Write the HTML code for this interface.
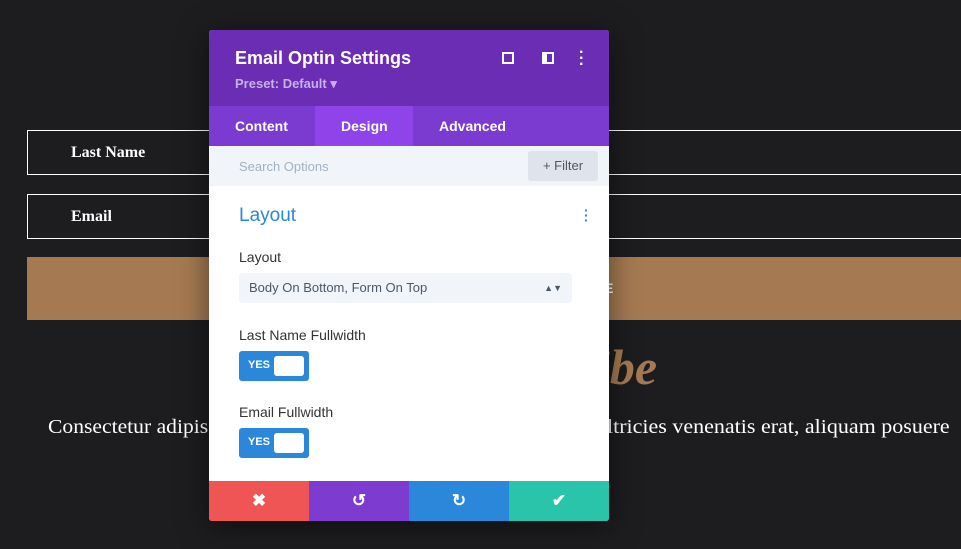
<!DOCTYPE html><html><head><style>
body{margin:0;width:961px;height:549px;background:#1d1d20;position:relative;overflow:hidden;font-family:"Liberation Sans",sans-serif}
.box{position:absolute;left:27px;right:-5px;border:1px solid #fff;height:45px;color:#fff;font-family:"Liberation Serif",serif;font-weight:bold;font-size:16px;line-height:43px;padding-left:43px;box-sizing:border-box}
.m{position:absolute;left:209px;top:30px;width:400px;height:491px;background:#fff;border-radius:3px;overflow:hidden;box-shadow:0 5px 30px rgba(0,0,0,.5)}
.lbl{position:absolute;left:30px;font-size:14px;color:#333}
.tg{position:absolute;left:30px;width:70px;height:30px;background:#2b87da;border-radius:3px}
.tg span{position:absolute;left:9px;top:8px;color:#fff;font-size:11px;font-weight:bold}
.tg i{position:absolute;right:5px;top:5px;width:30px;height:20px;background:#fff;border-radius:3px}
.b{position:absolute;top:451px;width:100px;height:40px;color:#fff;font-weight:bold;font-size:17px;text-align:center;line-height:40px}
</style></head><body>
<div class="box" style="top:130px">Last Name</div>
<div class="box" style="top:194px">Email</div>
<div style="position:absolute;left:27px;right:0;top:257px;height:63px;background:#a57a52"></div>
<div style="position:absolute;left:604px;top:281px;color:#fff;font-weight:bold;font-size:14px;line-height:1">E</div>
<div style="position:absolute;left:596px;top:338px;color:#a57a52;font-family:'Liberation Serif',serif;font-style:italic;font-weight:bold;font-size:50px">ibe</div>
<div style="position:absolute;left:48px;top:416px;color:#fff;font-family:'Liberation Serif',serif;font-size:20px;transform:scaleX(1.08);transform-origin:left">Consectetur adipis</div>
<div style="position:absolute;left:596px;top:416px;color:#fff;font-family:'Liberation Serif',serif;font-size:20px;white-space:nowrap;transform:scaleX(1.1);transform-origin:left">ultricies venenatis erat, aliquam posuere</div>
<div class="m">
<div style="position:absolute;left:0;top:0;width:400px;height:76px;background:#6a2db4"></div>
<div style="position:absolute;left:26px;top:18px;color:#fff;font-size:18px;font-weight:bold">Email Optin Settings</div>
<div style="position:absolute;left:26px;top:46px;color:#c6b0ea;font-size:13px;font-weight:bold">Preset: Default ▾</div>
<div style="position:absolute;left:293px;top:22px;width:12px;height:12px;border:2px solid #fff;box-sizing:border-box"></div>
<div style="position:absolute;left:333px;top:22px;width:12px;height:12px;border:2px solid #fff;box-sizing:border-box;border-left-width:5px"></div>
<div style="position:absolute;left:370px;top:20px;color:#fff;font-size:16px;font-weight:bold;line-height:6px">·<br>·<br>·</div>
<div style="position:absolute;left:0;top:76px;width:400px;height:40px;background:#7b3bd0"></div>
<div style="position:absolute;left:106px;top:76px;width:98px;height:40px;background:#8e44e8"></div>
<div style="position:absolute;top:88px;left:26px;color:#fff;font-weight:bold;font-size:14px">Content</div>
<div style="position:absolute;top:88px;left:132px;color:#fff;font-weight:bold;font-size:14px">Design</div>
<div style="position:absolute;top:88px;left:230px;color:#fff;font-weight:bold;font-size:14px">Advanced</div>
<div style="position:absolute;left:0;top:116px;width:400px;height:40px;background:#f1f5f9"></div>
<div style="position:absolute;left:30px;top:129px;color:#a3b1c2;font-size:13px">Search Options</div>
<div style="position:absolute;left:319px;top:121px;width:70px;height:30px;background:#dfe4ec;border-radius:3px;color:#4c5866;font-size:13px;line-height:30px;text-align:center">+ Filter</div>
<div style="position:absolute;left:30px;top:175px;color:#2b87da;font-size:19px">Layout</div>
<div style="position:absolute;left:375px;top:178px;color:#2b87da;font-size:14px;font-weight:bold;line-height:5px">·<br>·<br>·</div>
<div class="lbl" style="top:219px">Layout</div>
<div style="position:absolute;left:30px;top:243px;width:333px;height:30px;background:#f1f5f9;border-radius:3px;color:#4c5866;font-size:13px;line-height:30px;padding-left:10px;box-sizing:border-box">Body On Bottom, Form On Top<span style="position:absolute;right:10px;font-size:9px">▲▼</span></div>
<div class="lbl" style="top:297px">Last Name Fullwidth</div>
<div class="tg" style="top:321px"><span>YES</span><i></i></div>
<div class="lbl" style="top:374px">Email Fullwidth</div>
<div class="tg" style="top:398px"><span>YES</span><i></i></div>
<div class="b" style="left:0;background:#ef5555">✖</div>
<div class="b" style="left:100px;background:#7d3bcf">↺</div>
<div class="b" style="left:200px;background:#2b87da">↻</div>
<div class="b" style="left:300px;background:#29c4a9">✔</div>
</div>
</body></html>
